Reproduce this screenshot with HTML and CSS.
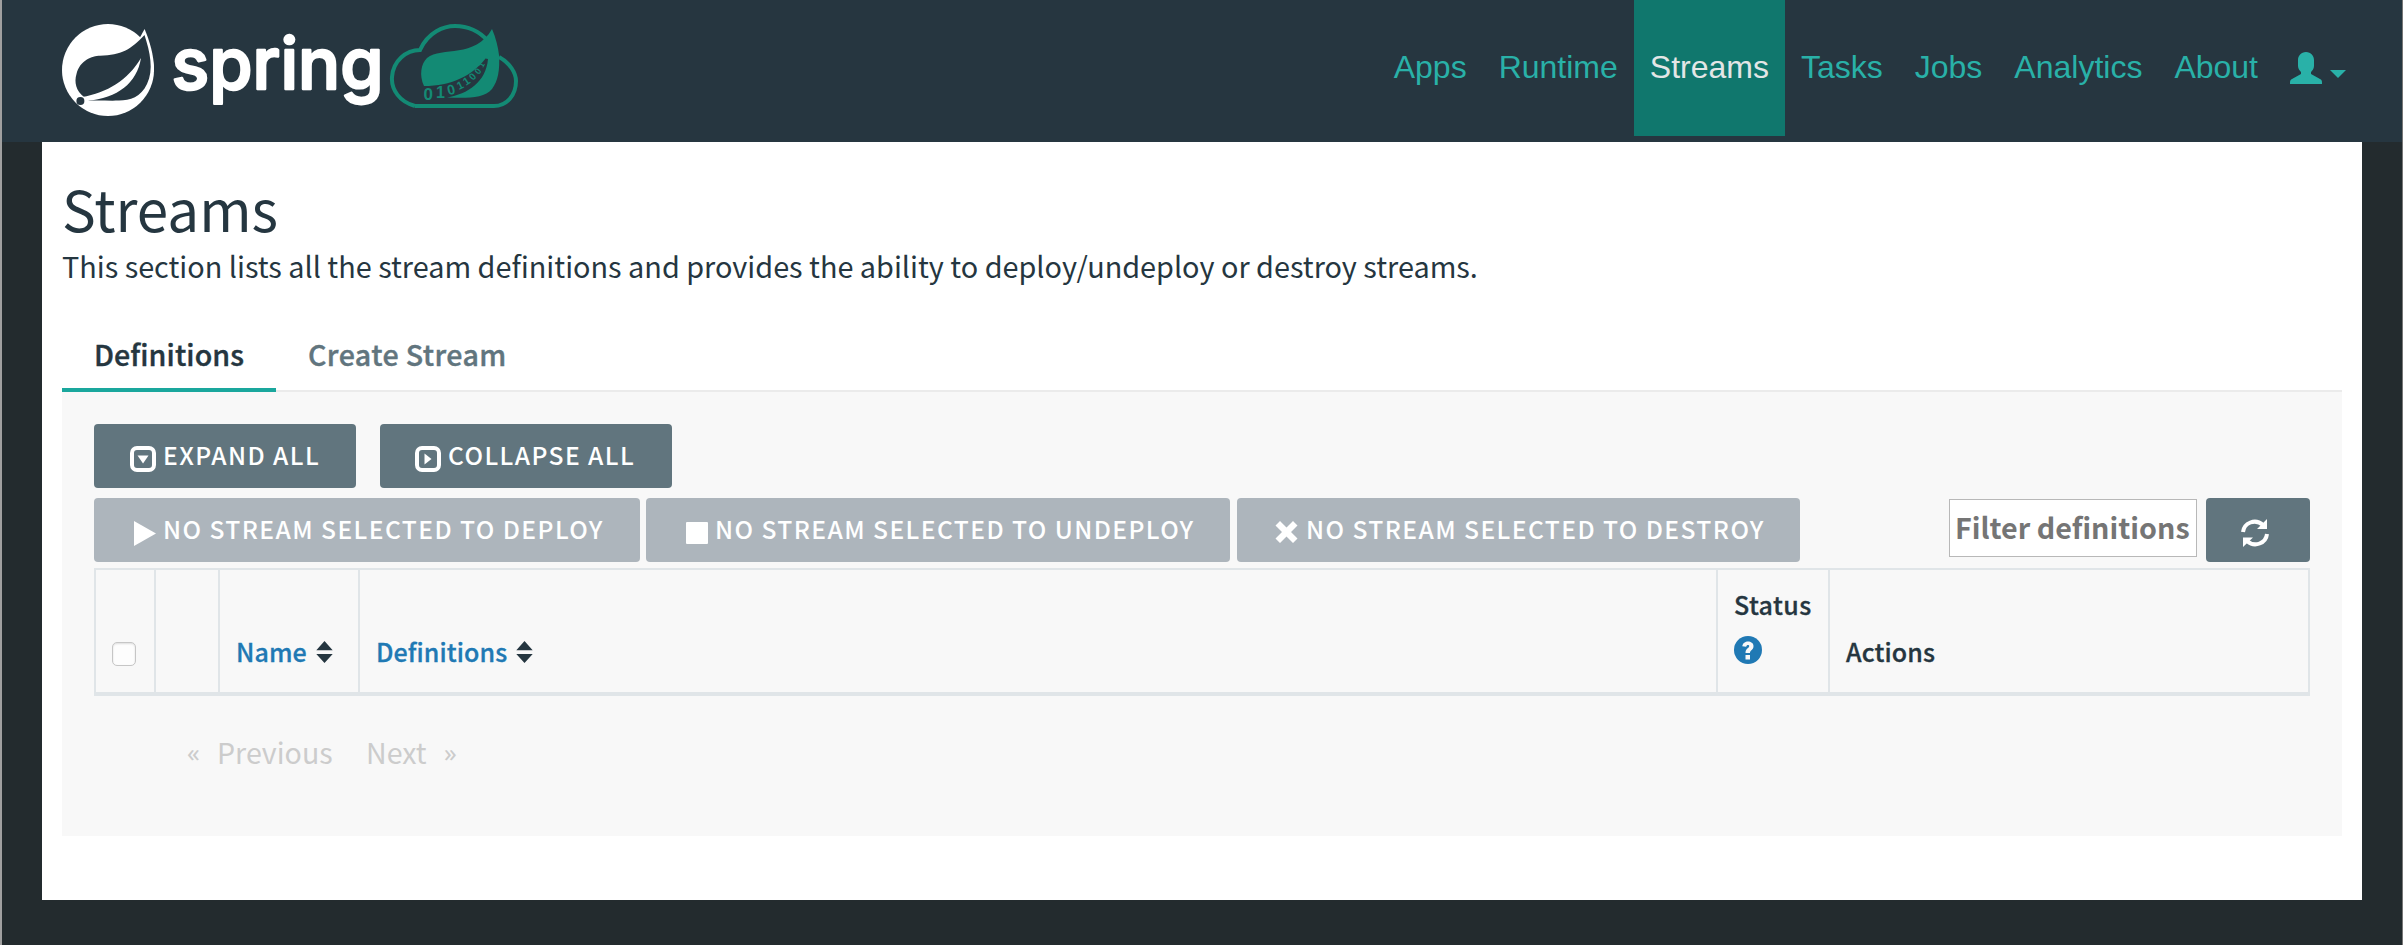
FILE: index.html
```html
<!DOCTYPE html>
<html lang="en">
<head>
<meta charset="utf-8">
<title>Streams</title>
<link rel="stylesheet" href="styles.css">
</head>
<body>
<svg class="defs" width="0" height="0">
  <symbol id="sort" viewBox="0 0 17 22"><path d="M0.3 9.2 8.5 0l8.2 9.2zM0.3 13 8.5 22l8.2-9z"/></symbol>
</svg>
<header class="navbar">
  <svg class="logo" viewBox="0 0 460 96" width="460" height="96">
    <circle class="white" cx="46" cy="46" r="46"/>
    <path class="hole" d="M78 13 84 5 94 5 94 32 88 28z"/>
    <path class="white" d="M76 17 82.600 5C87 16 92.300 30 92 48L80 46z"/>
    <path class="hole" d="M82.500 11C88 28 92 46 85 60C79 73 68 76.500 57 76.500C47 77 37 76 27 76.700L22 73C14 67 12 58 14.500 50C18 36 30 32 38 31.700C60 31 68 26 82.500 11z"/>
    <path class="white" d="M20 73C45 69 66 56 79 34C75 59 56 74 25 77z"/>
    <circle class="hole" cx="18.400" cy="77" r="4"/>
    <text class="wordmark" x="109.500" y="64.500" textLength="212" lengthAdjust="spacingAndGlyphs">spring</text>
    <path class="cloud-line" d="M353 82C338 78 329 66 330 53C331 37 344 26 358 26C366 8 382 2 393 2C406 2 418 8 426 17M437 33C448 39 454 49 454 57C454 71 445 82 432 82H353"/>
    <path class="cloud-fill" d="M430 5C434 14 436 23 437 31C438 46 436 57 430 65C422 75 403 74 385 73.500C406 70 424 58 426 35L423.500 34.500C410 52 389 62 362 62C357 51 359 40 365 34C380 22 413 35 430 5z"/>
    <g class="bits"><text x="361.500" y="75.500">0</text><text x="374" y="74" font-size="16">1</text><text x="386.500" y="71.500" font-size="14" transform="rotate(-14 386 71)">0</text><text x="397" y="66" font-size="11" transform="rotate(-26 397 66)">1</text><text x="404" y="62" font-size="11" transform="rotate(-34 404 62)">1</text><text x="411" y="57" font-size="10" transform="rotate(-45 411 57)">0</text><text x="417" y="51" font-size="9" transform="rotate(-55 417 51)">0</text><text x="421" y="44" font-size="8" transform="rotate(-62 421 44)">1</text></g>
  </svg>
  <nav class="nav">
    <a>Apps</a><a>Runtime</a><a class="active">Streams</a><a>Tasks</a><a>Jobs</a><a>Analytics</a><a>About</a>
    <a class="user"><svg width="56" height="32" viewBox="0 0 56 32"><path d="M16 0c5 0 8 4 8 8v6c0 3-2 5-3 6v2l9 5c2 1 2 2 2 5H0c0-3 0-4 2-5l9-5v-2c-1-1-3-3-3-6V8c0-4 3-8 8-8zM40 18h16l-8 8z"/></svg></a>
  </nav>
</header>
<main class="page">
  <h1>Streams</h1>
  <p class="lead">This section lists all the stream definitions and provides the ability to deploy/undeploy or destroy streams.</p>
  <div class="tabs"><a class="tab selected">Definitions</a><a class="tab">Create Stream</a></div>
  <section class="panel">
    <div class="row first">
      <button class="btn expand"><svg width="26" height="26" viewBox="0 0 26 26"><rect class="frame" x="2" y="2" width="22" height="22" rx="5"/><path d="M7.500 9.500h11l-5.500 8z"/></svg><span>EXPAND ALL</span></button>
      <button class="btn collapse"><svg width="26" height="26" viewBox="0 0 26 26"><rect class="frame" x="2" y="2" width="22" height="22" rx="5"/><path d="M9.500 7.500v11l7-5.500z"/></svg><span>COLLAPSE ALL</span></button>
    </div>
    <div class="row">
      <button class="btn off deploy"><svg width="26" height="26" viewBox="0 0 26 26"><path d="M4 1v25l22-12.500z"/></svg><span>NO STREAM SELECTED TO DEPLOY</span></button>
      <button class="btn off undeploy"><svg width="26" height="26" viewBox="0 0 26 26"><rect x="4" y="2" width="22" height="22" rx="1"/></svg><span>NO STREAM SELECTED TO UNDEPLOY</span></button>
      <button class="btn off destroy"><svg width="26" height="26" viewBox="0 0 26 26"><path d="M7 1l6.500 6.500L20 1l4.500 4.500L18 12l6.500 6.500L20 23l-6.500-6.500L7 23l-4.500-4.500L9 12 2.500 5.500z"/></svg><span>NO STREAM SELECTED TO DESTROY</span></button>
      <input class="filter" type="text" placeholder="Filter definitions">
      <button class="btn refresh"><svg width="28" height="28" viewBox="0 0 28 28"><path class="arc" d="M2 13C3 4 14-1 22 6M26 15C25 24 14 29 6 22"/><path d="M26 0v10H16zM2 28V18.500h10z"/></svg></button>
    </div>
    <table class="grid">
      <tr>
        <th class="c-check"><input class="check" type="checkbox"></th>
        <th class="c-blank"></th>
        <th class="c-name"><a>Name</a><svg class="sort" width="17" height="22"><use href="#sort"/></svg></th>
        <th class="c-def"><a>Definitions</a><svg class="sort" width="17" height="22"><use href="#sort"/></svg></th>
        <th class="c-status">Status<svg class="help" width="28" height="28" viewBox="0 0 28 28"><circle cx="14" cy="14" r="14"/><path class="mark" d="M8.300 10.300C9 3.500 19.500 4.200 19.500 10c0 4.500-3.500 3.800-3.500 7h-4.500c0-5 3.700-4.500 3.700-7 0-1.500-2.800-1.600-3 .8zM11.500 19h4.500v4.500h-4.500z"/></svg></th>
        <th class="c-actions">Actions</th>
      </tr>
    </table>
    <div class="pager"><span class="quo">«</span><span class="prev">Previous</span><span class="next">Next</span><span class="quo">»</span></div>
  </section>
</main>
</body>
</html>
```
FILE: styles.css
```css
* { box-sizing: border-box; }
body { margin: 0; height: 945px; background: #232b2e; border-left: 2px solid #a0a0a0; border-right: 1px solid #777; color: #253640; font-family: "Noto Sans CJK SC", "Noto Sans", sans-serif; overflow: hidden; }
.defs { display: block; }
.navbar { height: 142px; background: #263640; display: flex; justify-content: space-between; align-items: flex-start; padding: 0 40px 0 60px; box-shadow: -2px 0 #0d6b5d; }
.logo { margin-top: 24px; overflow: visible; }
.white { fill: #fff; }
.hole { fill: #263640; }
.wordmark { font: 500 71px "Inter", sans-serif; fill: #fff; stroke: #fff; stroke-width: 2.5; stroke-linejoin: round; }
.cloud-line { fill: none; stroke: #138a74; stroke-width: 4; }
.cloud-fill { fill: #138a74; }
.bits { font: 700 17px "Liberation Sans", sans-serif; fill: #138a74; }
.nav { display: flex; height: 136px; font: 32px/134px "Liberation Sans", Arial, sans-serif; color: #29b1a8; }
.nav a { padding: 0 16px; height: 136px; }
.nav .active { background: #10776d; color: #e3e6e6; }
.user svg { display: block; margin-top: 52px; fill: #29b1a8; }
.page { width: 2320px; height: 758px; margin-left: 40px; padding: 28px 20px 0; background: #fff; }
h1 { margin: 0; font-size: 56.6px; line-height: 74px; font-weight: 400; }
.lead { margin: 0; font-size: 28.83px; line-height: 44px; white-space: nowrap; }
.tabs { display: flex; margin-top: 29px; height: 75px; box-shadow: inset 0 -2px #ebebeb; }
.tab { height: 75px; padding: 17px 32px 0; font-size: 28.6px; line-height: 40px; font-weight: 500; letter-spacing: 0.4px; -webkit-text-stroke: 0.4px; color: #61757e; }
.tab.selected { width: 214px; letter-spacing: 0.1px; color: #253640; border-bottom: 4px solid #1aa79d; }
.panel { height: 444px; background: #f8f8f8; padding: 32px 32px 0; }
.row { display: flex; align-items: flex-start; height: 70px; }
.row.first { height: 74px; }
.btn { height: 64px; padding: 0 0 5px 36px; border: 0; border-radius: 4px; background: #61757e; color: #fff; display: flex; align-items: center; gap: 7px; font: 500 24.6px/40px "Noto Sans CJK SC", sans-serif; letter-spacing: 1.43px; white-space: nowrap; }
.btn svg { fill: #fff; flex: none; position: relative; top: 5px; }
.frame { fill: none; stroke: #fff; stroke-width: 4; }
.btn.off { background: #adb5bc; }
.expand { width: 262px; margin-right: 24px; }
.collapse { width: 292px; padding-left: 35px; }
.deploy { width: 546px; margin-right: 6px; }
.undeploy { width: 584px; margin-right: 7px; }
.destroy { width: 563px; }
.filter { margin: 1px 9px 0 auto; width: 248px; height: 58px; border: 1px solid #b8b8b8; border-radius: 0; padding: 0 0 3px 5px; background: #fff; font: 700 28.7px "Noto Sans CJK SC", sans-serif; }
.filter::placeholder { color: #757575; opacity: 1; }
.btn.refresh { width: 104px; padding-left: 35px; }
.arc { fill: none; stroke: #fff; stroke-width: 4; }
.grid { width: 2216px; height: 128px; border-collapse: separate; border-spacing: 0; table-layout: fixed; border: solid #e0e5e8; border-width: 2px 2px 4px; }
th { padding: 0 0 17px 16px; vertical-align: bottom; text-align: left; border-right: 2px solid #e0e5e8; font-size: 25px; line-height: 48px; font-weight: 500; -webkit-text-stroke: 0.3px; letter-spacing: 0.1px; height: 122px; }
th a { color: #2079b4; }
th:last-child { border-right: 0; }
.c-check { width: 60px; padding: 0 0 26px 16px; line-height: 0; }
.c-blank { width: 64px; }
.c-name { width: 140px; }
.c-def { width: 1358px; }
.c-status { width: 112px; padding-left: 16px; padding-bottom: 28px; letter-spacing: 0.4px; }
.c-actions { width: 478px; padding-left: 16px; }
.sort { margin-left: 9px; fill: #253640; vertical-align: -1px; }
.help { display: block; margin-top: 8px; fill: #2079b4; }
.mark { fill: #f8f8f8; }
.check { appearance: none; display: block; margin: 0; width: 24px; height: 24px; border: 1px solid #c6c6c6; border-radius: 5px; background: #fdfdfd; box-shadow: inset 0 1px 2px #ddd; }
.pager { display: flex; margin: 36px 0 0 93px; font-size: 28.6px; line-height: 40px; color: #ccc; }
.pager .quo { width: 30px; font-family: "Noto Sans", sans-serif; font-size: 25px; }
.prev { width: 149px; }
.next { width: 78px; }
```
